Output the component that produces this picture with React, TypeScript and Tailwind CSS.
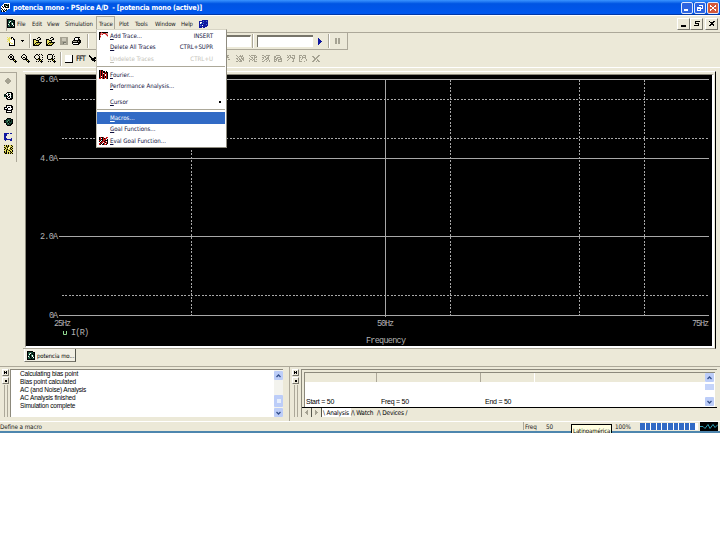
import type { ReactNode } from "react";
import clsx from "clsx";

const INK: Record<string, string> = {
  k: "#000000",
  w: "#ffffff",
  g: "#a5a292",
  l: "#c9c6b6",
  d: "#77786c",
  y: "#e8e060",
  o: "#8a8420",
  r: "#c81818",
  p: "#e8a0a0",
  b: "#1018a0",
  c: "#3a78c8",
  e: "#184838",
  n: "#50a070",
};

// Small bitmap icons, one character per pixel
function Pixels({ rows, className }: { rows: string[]; className?: string }) {
  const w = Math.max(...rows.map((r) => r.length));
  return (
    <svg
      width={w}
      height={rows.length}
      viewBox={`0 0 ${w} ${rows.length}`}
      shapeRendering="crispEdges"
      className={clsx("shrink-0", className)}
    >
      {rows.flatMap((row, y) =>
        row.split("").map((ch, x) =>
          INK[ch] ? <rect key={`${x}-${y}`} x={x} y={y} width="1" height="1" fill={INK[ch]} /> : null
        )
      )}
    </svg>
  );
}

const APP = ["...wwwwww", "..wkkknkw", ".wwknkkkw", "wkwkkwnkw", "wwkwkkkkw", "kwwwwwwww", "wkwewkw..", "ewkwke...", "kwkkw...."];
const DOC = ["kkkkkk..", "keeeeekk", "kenwekek", "kewkeekk", "keeknwek", "kwekewek", "kenkekwk", "keeekeek", "kkkkkkkk"];
const NEW = ["y.y.kk..", ".yyykwk.", "yyywywkk", ".yywwwwk", "y.ywwwwk", "..yywwwk", "..kwyywk", "..kwwwwk", "..kkkkkk"];
const OPEN = [".....kk..", "....k..k.", "kkk...kk.", "kyykkk...", "kyyyyk...", "kyykkkkkk", "kykyoyok.", "kkyoyok..", "kkkkkk..."];
const SAVE = ["gggggggg", "ggllllgg", "ggllllgg", "ggllllgg", "gggggggg", "gggdddgg", "gggdllgg", "gggggggg"];
const PRINT = ["...kkkkk.", "..kwwwk..", "..kwwwkk.", ".kkkkkkkk", "kggggkgkk", "kkkkkkkkk", "kwwwwwkk.", ".kkkkkk.."];
const ZOOM_IN = ["..kk.....", ".k..k....", "k.kk.k...", "k.kk.k...", ".k..kk...", "..kkkkk..", ".....kyk.", "......kkk", ".......k."];
const ZOOM_OUT = ["..kk.....", ".k..k....", "k....k...", "k.kk.k...", ".k..kk...", "..kkkkk..", ".....kyk.", "......kkk", ".......k."];
const ZOOM_AREA = ["..kk.k.k.", ".k..k...k", "k....k...", "k....k..k", ".k..kk...", "..kkokk.k", ".....kyk.", "..k.k.kkk", ".......k."];
const ZOOM_FIT = [".kkkk.k..", "k....k...", "k....k.k.", "k....k...", "k...kk.k.", ".kkkokk..", ".....kyk.", ".k.k..kkk", ".......k."];
const CHECK = ["k........", "kk.....k.", ".kk..kkk.", "..kkkkk..", "..kkkk...", "...kkkkk.", ".....k..."];
const GHOSTS = [
  ["g.g.gg..", "..g.g...", "gg.ggg..", ".g.g....", "g..g.gg.", "..gg....", "........", "........"],
  ["g...g.g..", ".g.gggg..", "..g..g.g.", "gg.g.ggg.", ".g.gg.gg.", "..g.gg.g.", "gg.ggg...", "........."],
  ["g.ggggg.", ".g...g.g", "..gg.ggg", "g..g.g..", ".gg.gg.g", "g..g.g..", "g....ggg", "........"],
  ["gg..gggg", "..gg..g.", "gg.g.gg.", ".g..ggg.", "g..gg.g.", "..g..g.g", "gg..g..g", "........"],
  ["..gggg..", "gg....g.", "gg.gggg.", "g.gg..gg", "ggg.gggg", "g.g.g..g", "gg..gggg", "........"],
  ["g.gg.ggg", ".g.g...g", "gg.ggg.g", "..g..ggg", ".g....g.", "g.....g.", ".....gg.", "........"],
  ["ggg.ggg.", "g..g..g.", "gg.gggg.", "g..g..g.", "g.g....g", "g......g", "ggg..g..", "........"],
  ["......gg", "gg...gg.", ".gg.gg..", "..ggg...", "..gg.g..", ".gg..gg.", "gg..g.gg", "........"],
];
const RAIL_MARK = ["..gg..", ".gggg.", "gggggg", "gggggg", ".gggg.", "..gg.."];
const RAIL = [
  ["...kkkkk.", "..kwnwwkk", "ekwwkkwkk", "kekwkwwek", "eekkwkwkk", "..kwkkwek", "..kkwwkkk", "...kkkkk."],
  ["..kkkkkk.", "..kwwwwkk", "kkkwkkwkk", "kwwkwwwwk", "kkkkwwwkk", "..kkkkkk.", "..kwwwwk.", "..kkkkkk."],
  ["...kkkk..", "..keeeekk", "kkeenekek", "keenkekek", "kkeekeeek", "..kenkekk", "..keeekk.", "...kkkk.."],
  ["bbbbb.bb", "bbb.....", "bbb.....", "bb......", "bb......", "bbb....b", "bbbbbbbb", ".b....bb"],
  ["kykykyyky", "yykokyyyk", "koykywoky", "ykyowykyk", "kyokyyoky", "yykyokyyk", "kykyyykyk", "kokykyoky", "ykkykykyk"],
];
const ADD_TRACE = ["kkrkkkkkk", "krpprrrpp", "krprwwprp", "kpwwwwwpr", "krwwwwwwp", "kpwwwwwww", "kwwwwwwww", "kwwwwwwww"];
const FOURIER = ["krkk.....", "krkrkk.k.", "krkrkkrkk", "krkrwrkrk", "krkrkrwrk", "krkrkrwrk", "krwrkrkrk", "krkrkrkrk", "rr.rkr.rk"];
const EVAL = ["krkkr..rr", "krwkrkrr.", "krkkrrr.k", "rkwkrrkkk", "k.krrkrwk", "wkrr.rkrk", "rrk.krwrk", "rk.kkrrk."];
const HELP = ["...bbbbbb", "bbbbcbbcb", "bwwbbbbbb", "bwcbcbbbb", "bbbbbbbcb", "bcbwbbbbb", "bbbbbbbb.", "bbb.bb..."];

const MENUS = [
  { name: "File", box: "w-[15px]" },
  { name: "Edit", box: "w-[15px]" },
  { name: "View", box: "w-[18px]" },
  { name: "Simulation", box: "w-[31px]" },
  { name: "Trace", box: "w-[19px]", open: true },
  { name: "Plot", box: "w-[20px] pl-[4px]" },
  { name: "Tools", box: "w-[20px]" },
  { name: "Window", box: "w-[26px]" },
  { name: "Help", box: "w-[18px]" },
];

function Divider({ className }: { className?: string }) {
  return <div className={clsx("h-[14px] w-[2px] shrink-0 border-l border-[#aca899] bg-white", className)} />;
}

function TitleButton({ close, children }: { close?: boolean; children: ReactNode }) {
  return (
    <div
      className={clsx(
        "flex h-[12px] w-[12px] items-center justify-center rounded-[2px] border border-[#dfe9fb]",
        close ? "bg-[#d4583a]" : "bg-[#2d64e0]"
      )}
    >
      {children}
    </div>
  );
}

function MdiButton({ rows, className }: { rows: string[]; className?: string }) {
  return (
    <div
      className={clsx(
        "flex h-[12px] w-[13px] items-center justify-center border border-t-white border-r-[#77756a] border-b-[#77756a] border-l-white bg-[#ece9d8]",
        className
      )}
    >
      <Pixels rows={rows} />
    </div>
  );
}

function MenuItem({ label, keys, icon, state }: { label: string; keys?: string; icon?: string[]; state?: "off" | "hot" }) {
  return (
    <div
      className={clsx(
        "flex h-[11.5px] items-center",
        state === "hot" && "bg-[#316ac5] text-white",
        state === "off" && "text-[#c4c2b8]"
      )}
    >
      <div className="flex w-[13px] pl-[2px]">{icon && <Pixels rows={icon} />}</div>
      <span className="-mt-px flex-1 whitespace-pre">
        <u className="underline decoration-[0.5px] underline-offset-1">{label[0]}</u>
        {label.slice(1)}
      </span>
      <span className="-mt-px pr-[12px]">{keys}</span>
    </div>
  );
}

function MenuRule() {
  return (
    <div className="flex h-[4.5px] items-center">
      <div className="h-px w-full bg-[#aca899]" />
    </div>
  );
}

function TraceMenu() {
  return (
    <div className="absolute top-[29px] left-[96px] z-10 h-[119px] w-[131px] border border-t-[#d8d5c5] border-r-[#8f8c80] border-b-[#8f8c80] border-l-[#c5c2b4] bg-white pr-px text-[6.1px] tracking-[0px] text-[#10103c]">
      <MenuItem label="Add Trace..." keys="INSERT" icon={ADD_TRACE} />
      <MenuItem label="Delete All Traces" keys="CTRL+SUPR" />
      <MenuItem label="Undelete Traces" keys="CTRL+U" state="off" />
      <MenuRule />
      <MenuItem label="Fourier..." icon={FOURIER} />
      <MenuItem label="Performance Analysis..." />
      <div className="h-[4px]" />
      <div className="flex h-[11.5px] items-center justify-between pr-[4px] pl-[13px]">
        <span className="-mt-px">
          <u className="underline-offset-1">C</u>ursor
        </span>
        <span className="h-[2px] w-[2px] bg-black" />
      </div>
      <MenuRule />
      <MenuItem label="Macros..." state="hot" />
      <MenuItem label="Goal Functions..." />
      <MenuItem label="Eval Goal Function..." icon={EVAL} />
    </div>
  );
}

function Plot() {
  return (
    <svg width="686" height="271" viewBox="26 75 686 271" className="block bg-black" fontFamily="Liberation Mono, monospace" fontSize="8.5" fill="#b4b4b4">
      <g stroke="#a8a8a8" strokeWidth="1" shapeRendering="crispEdges">
        {[79.5, 158.5, 236.5, 315.5].map((y) => (
          <line key={y} x1="59" x2="709" y1={y} y2={y} />
        ))}
        <line x1="385.5" x2="385.5" y1="79" y2="317" />
        {[99.5, 138.5, 295.5].map((y) => (
          <line key={y} x1="62" x2="708" y1={y} y2={y} strokeDasharray="2 1 2 2" />
        ))}
        {[191.5, 450.5, 579.5, 644.5].map((x) => (
          <line key={x} x1={x} x2={x} y1="80" y2="315" strokeDasharray="2 1 2 2" />
        ))}
      </g>
      <text x="40" y="82" textLength="18">6.0A</text>
      <text x="40" y="161" textLength="18">4.0A</text>
      <text x="40" y="239" textLength="18">2.0A</text>
      <text x="49" y="318" textLength="9">0A</text>
      <text x="54" y="326" textLength="17">25Hz</text>
      <text x="377" y="326" textLength="17">50Hz</text>
      <text x="692" y="326" textLength="17">75Hz</text>
      <text x="71" y="335" textLength="18">I(R)</text>
      <text x="366" y="343" textLength="40">Frequency</text>
      <path d="M63.5 331v3.5h3V331" fill="none" stroke="#90d890" />
    </svg>
  );
}

function ScrollArrow({ up }: { up?: boolean }) {
  return (
    <div className="flex h-[9px] w-[9px] items-center justify-center rounded-[1px] bg-[#bccdf8]">
      <svg width="5" height="4" viewBox="0 0 5 4" fill="none" stroke="#35508c" strokeWidth="1.3">
        <path d={up ? "M.5 3L2.5 1l2 2" : "M.5 1l2 2 2-2"} />
      </svg>
    </div>
  );
}

function PaneGrip() {
  return (
    <div className="flex w-[7px] flex-col items-center gap-px">
      <div className="flex h-[7px] w-[7px] items-center justify-center border border-t-white border-r-[#77756a] border-b-[#77756a] border-l-white">
        <Pixels rows={["k.k", "kkk", "k.k"]} />
      </div>
      <div className="flex h-[7px] w-[7px] items-center justify-center border border-t-white border-r-[#77756a] border-b-[#77756a] border-l-white">
        <div className="h-[2px] w-[2px] bg-black" />
      </div>
      <div className="w-[4px] flex-1 border-r border-l border-[#aca899]" />
    </div>
  );
}

function OutputPane() {
  return (
    <div className="flex h-[54px] w-[290px] border-r border-[#aca899] pt-[2px] pb-[4px] pl-[2px]">
      <PaneGrip />
      <div className="ml-px flex h-[48px] w-[273px] border-t border-l border-[#8c897c] bg-white">
        <div className="flex-1 pl-[9px] font-['Liberation_Sans'] text-[6.5px] leading-[7.9px] tracking-[-0.17px] text-black">
          <div>Calculating bias point</div>
          <div>Bias point calculated</div>
          <div>AC (and Noise) Analysis</div>
          <div>AC Analysis finished</div>
          <div>Simulation complete</div>
        </div>
        <div className="flex w-[9px] flex-col bg-[#f3f3ee] pt-px">
          <ScrollArrow up />
          <div className="flex-1" />
          <div className="mb-px flex h-[12px] items-center justify-center rounded-[1px] bg-[#bccdf8]">
            <div className="h-[4px] w-[4px] bg-[#e6eefc]" />
          </div>
          <ScrollArrow />
        </div>
      </div>
    </div>
  );
}

function DevicesPane() {
  return (
    <div className="flex h-[54px] flex-1 pt-[2px] pb-[4px] pl-[2px]">
      <PaneGrip />
      <div className="ml-[2px] w-[416px] border-t border-l border-[#8c897c]">
        <div className="mt-[2px] mr-[2px] ml-[2px] flex h-[35px] border-t border-l border-[#8c897c] bg-white">
          <div className="flex flex-1 flex-col">
            <div className="flex h-[9px] bg-[#ece9d8]">
              <div className="w-[72px] border-r border-[#aca899]" />
              <div className="w-[104px] border-r border-[#aca899]" />
              <div className="w-[54px] border-r border-white" />
            </div>
            <div className="mt-[15px] flex h-[10px] overflow-hidden pl-px font-['Liberation_Sans'] text-[7px] leading-[10px] tracking-[-0.25px] text-black">
              <span className="w-[75px]">Start = 50</span>
              <span className="w-[104px]">Freq = 50</span>
              <span>End = 50</span>
            </div>
          </div>
          <div className="flex w-[10px] flex-col items-start pr-px pb-px">
            <ScrollArrow up />
            <div className="mt-[2px] h-[6px] w-[9px] bg-[#c5d4fa]" />
            <div className="flex-1" />
            <ScrollArrow />
          </div>
        </div>
        <div className="flex h-[10px] border-t border-black">
          <div className="flex w-[10px] items-center justify-center border-r border-[#55564c]">
            <Pixels rows={["..g", ".gg", "ggg", ".gg", "..g"]} />
          </div>
          <div className="flex w-[10px] items-center justify-center border-r border-[#55564c]">
            <Pixels rows={["g..", "gg.", "ggg", "gg.", "g.."]} />
          </div>
          <div className="flex text-[6.5px] leading-[10px] tracking-[-0.2px] text-black">
            <span className="w-[29px] bg-white pl-px whitespace-pre">\ Analysis</span>
            <span className="w-[26px] whitespace-pre">/\ Watch</span>
            <span className="whitespace-pre">/\ Devices /</span>
          </div>
        </div>
      </div>
    </div>
  );
}

export default function App() {
  return (
    <div className="relative h-[540px] w-[720px] overflow-hidden bg-white font-['DejaVu_Sans_Condensed','Liberation_Sans',sans-serif] text-[6px] leading-[9px] tracking-[-0.1px] text-[#202020]">
      <div className="flex h-[433px] flex-col border-b-2 border-[#4e86ae] bg-[#ece9d8]">
        {/* title bar */}
        <div className="flex h-[15px] shrink-0 items-center bg-linear-to-b from-[#3a94ff] via-[#0054e3] via-25% to-[#0058f0] pr-px shadow-[inset_0_-1px_0_#0038a8]">
          <Pixels rows={APP} className="ml-px" />
          <span className="flex-1 pl-[3px] text-[7.2px] font-bold tracking-[-0.21px] whitespace-pre text-white">
            potencia mono - PSpice A/D  - [potencia mono (active)]
          </span>
          <div className="flex gap-px">
            <TitleButton>
              <Pixels rows={["......", "......", "......", "......", "wwww..", "wwww.."]} />
            </TitleButton>
            <TitleButton>
              <Pixels rows={["..wwww", ".....w", "wwww.w", "wwwwww", "w..w..", "wwww.."]} />
            </TitleButton>
            <TitleButton close>
              <Pixels rows={["w....w", "ww..ww", "..ww..", "..ww..", "ww..ww", "w....w"]} />
            </TitleButton>
          </div>
        </div>

        {/* menu bar */}
        <div className="flex h-[18px] shrink-0 items-center border-t border-b border-t-white border-b-[#aca899] pl-[6px]">
          <div className="h-[13px] w-px bg-[#aca899]" />
          <Pixels rows={DOC} className="-mt-px" />
          <div className="-mt-px flex flex-1 items-center pl-[2px]">
            {MENUS.map((m) => (
              <span
                key={m.name}
                className={clsx(m.box, m.open && "flex h-[15px] items-center border border-b-0 border-[#aca899] pb-[2px] pl-[2px]")}
              >
                {m.name}
              </span>
            ))}
            <Pixels rows={HELP} />
          </div>
          <MdiButton rows={[".....", ".....", ".....", ".....", "kkkkk", "kkkkk"]} />
          <MdiButton rows={[".kkkkk", ".k....", ".kkkk.", "....k.", "kkkkk.", "......"]} />
          <MdiButton rows={["k...kk", ".kkkk.", "..kk..", ".kkkk.", "kk..k.", "......"]} className="mr-[2px] ml-[2px]" />
        </div>

        {/* main toolbar */}
        <div className="flex h-[17px] w-[348px] shrink-0 items-center border-r border-b border-[#aca899] pl-[7px]">
          <Pixels rows={NEW} />
          <Pixels rows={["kkk", ".k."]} className="ml-[6px]" />
          <Divider className="ml-[5px]" />
          <Pixels rows={OPEN} className="ml-[2px]" />
          <Pixels rows={OPEN} className="ml-[4px]" />
          <Pixels rows={SAVE} className="ml-[5px]" />
          <Pixels rows={PRINT} className="ml-[4px]" />
          <Divider className="ml-[6px]" />
          <div className="ml-[63px] h-[12px] w-[99px] border-t-2 border-r border-t-[#77756a] border-r-white bg-white" />
          <Divider className="ml-px" />
          <div className="ml-[3px] h-[12px] w-[56px] border-t-2 border-l border-[#77756a] bg-white" />
          <Pixels rows={["b...", "bb..", "bbb.", "bbbb", "bbb.", "bb..", "b..."]} className="ml-[5px]" />
          <Divider className="ml-[6px]" />
          <Pixels rows={["gg.gg", "gg.gg", "gg.gg", "gg.gg", "gg.gg", "gg.gg"]} className="ml-[5px]" />
        </div>

        {/* probe toolbar */}
        <div className="flex h-[18px] shrink-0 items-center border-b border-white pl-[8px]">
          <div className="flex gap-[4px]">
            <Pixels rows={ZOOM_IN} />
            <Pixels rows={ZOOM_OUT} />
            <Pixels rows={ZOOM_AREA} />
            <Pixels rows={ZOOM_FIT} />
          </div>
          <Divider className="ml-[4px]" />
          <div className="ml-[3px] h-[8px] w-[8px] border-r border-b border-black bg-white" />
          <span className="w-[16px] pl-[3px] text-[7.5px] tracking-[-0.9px] text-black">FFT</span>
          <Pixels rows={CHECK} />
          <div className="flex gap-[4.5px] pl-[125px]">
            {GHOSTS.map((rows, i) => (
              <Pixels key={i} rows={rows} />
            ))}
          </div>
        </div>

        {/* workspace */}
        <div className="flex h-[296px] shrink-0">
          <div className="mt-[4px] flex h-[90px] w-[17px] flex-col items-center border-t border-r border-[#aca899]">
            <Pixels rows={RAIL_MARK} className="mt-[5px]" />
            <Pixels rows={RAIL[0]} className="mt-[8px]" />
            <Pixels rows={RAIL[1]} className="mt-[5px]" />
            <Pixels rows={RAIL[2]} className="mt-[5px]" />
            <Pixels rows={RAIL[3]} className="mt-[7px]" />
            <Pixels rows={RAIL[4]} className="mt-[4px]" />
          </div>
          <div className="ml-[6px] w-[693px]">
            <div className="mt-[3px] h-[278px] border-t border-r border-b border-t-white border-r-black border-b-[#aca899] pt-[2px] pl-[2px]">
              <div className="w-[689px] border-t border-r-2 border-b-2 border-l border-t-[#8c897c] border-r-white border-b-white border-l-[#8c897c]">
                <Plot />
              </div>
            </div>
            <div className="ml-px flex h-[13px] w-[52px] items-center gap-[2px] border-r border-b border-l border-r-[#55564c] border-b-[#77756a] border-l-white bg-[#f2f0e4] pl-[2px] whitespace-nowrap text-black">
              <Pixels rows={DOC} />
              potencia mo...
            </div>
          </div>
        </div>

        {/* docked panes */}
        <div className="flex h-[57px] shrink-0 flex-col">
          <div className="h-[3px] shrink-0 border-b border-[#aca899]" />
          <div className="flex border-b border-white shadow-[0_-3px_0_-2px_#aca899]">
            <OutputPane />
            <DevicesPane />
          </div>
        </div>

        {/* status bar */}
        <div className="flex h-[10px] items-center text-[6.3px]">
          <span className="flex-1">Define a macro</span>
          <div className="flex h-[8px] w-[91px] items-center border-l border-[#aca899] pl-px">
            <span className="w-[21px]">Freq</span>
            <span>50</span>
          </div>
          <div className="flex h-[8px] w-[26px] items-center pl-px">100%</div>
          <div className="flex h-[7px] w-[58px] gap-px bg-white">
            {Array.from({ length: 10 }, (_, i) => (
              <div key={i} className="w-[4.6px] bg-[#316ac5]" />
            ))}
          </div>
          <div className="mr-[2px] ml-[2px] flex h-[9px] w-[18px] items-center justify-center bg-black">
            <svg width="18" height="9" viewBox="0 0 18 9" fill="none" stroke="#38b0c8" strokeWidth="0.9">
              <path d="M0 4.5h3l2 2 3-4 2 4 3-4 2 3 3-3" />
            </svg>
          </div>
        </div>
      </div>

      <TraceMenu />

      {/* language bar hint, cut by the window edge */}
      <div className="absolute top-[424px] left-[571px] h-[9px] w-[41px] overflow-hidden border border-b-0 border-black bg-[#ffffe1] pl-px text-[6px] leading-[11px] text-black">
        Latinoamérica
      </div>
    </div>
  );
}
